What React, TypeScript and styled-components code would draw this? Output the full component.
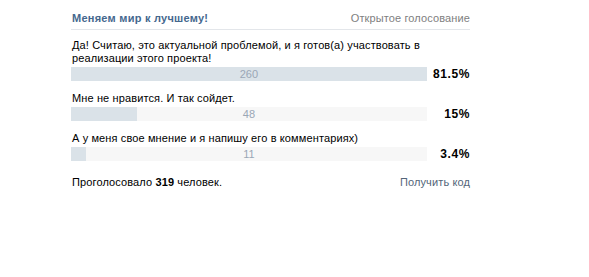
import React from "react";
import styled, { createGlobalStyle } from "styled-components";

const Global = createGlobalStyle`
  html, body { margin: 0; padding: 0; background: #fff; }
  body {
    font-family: Tahoma, "Liberation Sans", Arial, sans-serif;
    font-size: 11px;
    letter-spacing: 0.12px;
    color: #000;
  }
`;

const Poll = styled.div`
  width: 399px;
  margin-left: 71px;
  padding-top: 11px;
`;

const Header = styled.div`
  display: flex;
  justify-content: space-between;
  align-items: center;
  line-height: 14px;
  padding: 0 0 4px 1px;
  border-bottom: 1px solid #e3e6ea;
`;

const Title = styled.div`
  font-weight: bold;
  color: #45688e;
  letter-spacing: 0.25px;
`;

const Kind = styled.div`
  color: #808080;
`;

const Options = styled.div`
  margin-top: 9px;
  display: flex;
  flex-direction: column;
  gap: 11px;
`;

const Option = styled.div`
  display: flex;
  flex-direction: column;
  gap: 2px;
`;

const Label = styled.div`
  line-height: 13px;
  padding-left: 1px;
  max-width: 356px;
  color: #000;
`;

const Row = styled.div`
  display: flex;
  align-items: center;
  gap: 6px;
`;

const Bar = styled.div`
  position: relative;
  width: 356px;
  height: 14px;
  background: #f7f7f7;
`;

const Fill = styled.div`
  height: 100%;
  background: #dae2e8;
`;

const Count = styled.div`
  position: absolute;
  inset: 0;
  display: flex;
  align-items: center;
  justify-content: center;
  color: #9aa7b6;
  line-height: 14px;
`;

const Percent = styled.div`
  flex: 1;
  text-align: right;
  font-weight: bold;
  font-size: 12px;
  letter-spacing: 0.6px;
`;

const Footer = styled.div`
  margin-top: 15px;
  display: flex;
  justify-content: space-between;
  line-height: 13px;
  padding-left: 1px;
`;

const Link = styled.a`
  color: #536579;
  text-decoration: none;
  cursor: pointer;
`;

const options = [
  { text: "Да! Считаю, это актуальной проблемой, и я готов(а) участвовать в реализации этого проекта!", count: 260, pct: "81.5%" },
  { text: "Мне не нравится. И так сойдет.", count: 48, pct: "15%" },
  { text: "А у меня свое мнение и я напишу его в комментариях)", count: 11, pct: "3.4%" },
];

const max = Math.max(...options.map((o) => o.count));

export default function App() {
  return (
    <>
      <Global />
      <Poll>
        <Header>
          <Title>Меняем мир к лучшему!</Title>
          <Kind>Открытое голосование</Kind>
        </Header>
        <Options>
          {options.map((o) => (
            <Option key={o.text}>
              <Label>{o.text}</Label>
              <Row>
                <Bar>
                  <Fill style={{ width: `${(o.count / max) * 100}%` }} />
                  <Count>{o.count}</Count>
                </Bar>
                <Percent>{o.pct}</Percent>
              </Row>
            </Option>
          ))}
        </Options>
        <Footer>
          <span>
            Проголосовало <b>319</b> человек.
          </span>
          <Link>Получить код</Link>
        </Footer>
      </Poll>
    </>
  );
}
